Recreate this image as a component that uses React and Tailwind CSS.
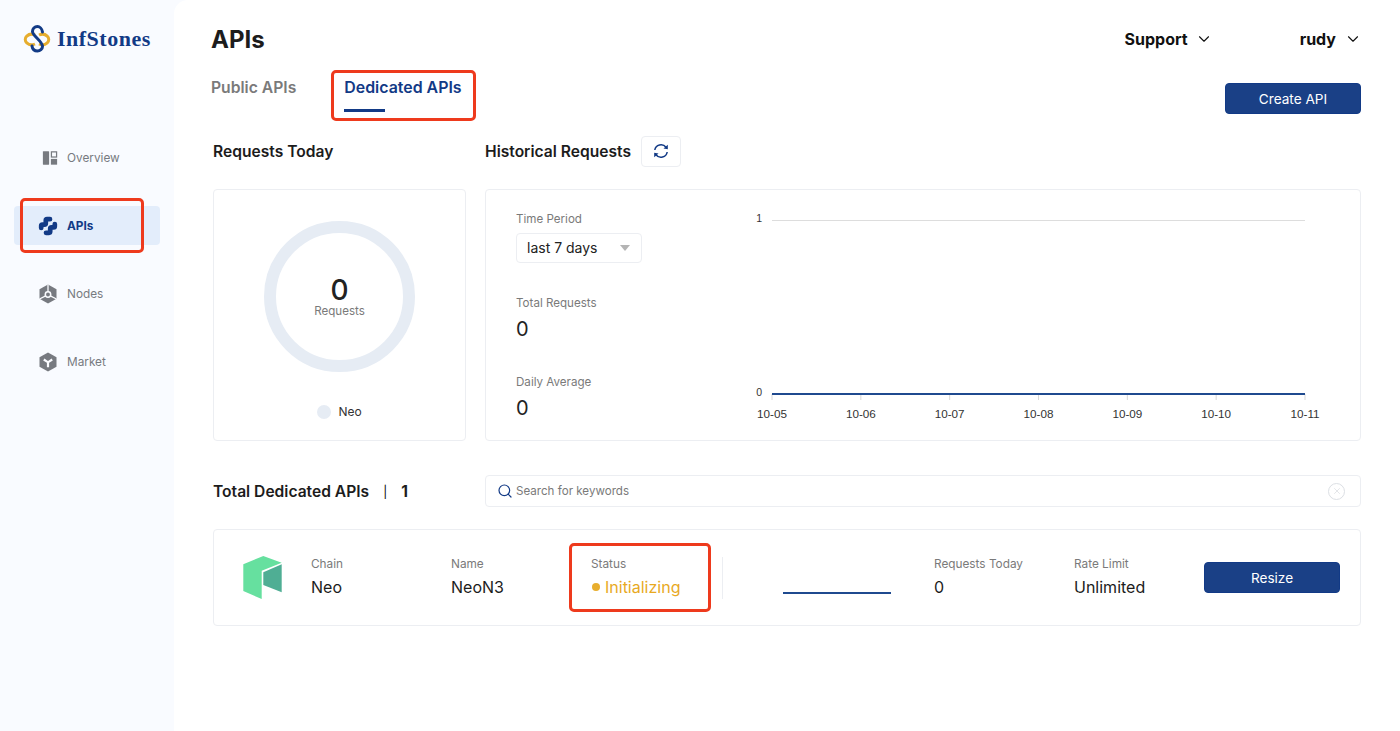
import React from 'react';
import { ChevronDown, Search, X } from 'lucide-react';

const OverviewIcon = () => (
  <svg width="18" height="18" viewBox="0 0 18 18" className="ml-[4px]">
    <rect x="1" y="1.500" width="7" height="15" rx="0.5" fill="#777a80" />
    <rect x="10.600" y="2.100" width="5.800" height="5.800" fill="none" stroke="#777a80" strokeWidth="1.400" />
    <rect x="10" y="10" width="7" height="6.500" fill="#777a80" />
  </svg>
);

const ApisIcon = () => (
  <svg width="20" height="20" viewBox="0 0 20 20" fill="none" stroke="#123a86" strokeWidth="4.700" strokeLinecap="round" strokeLinejoin="round">
    <path d="M12 3.200H9Q7.800 3.200 7.800 4.400V7.200Q7.800 8.600 6.400 8.600H4.400Q3.200 8.600 3.200 9.800V12" />
    <path d="M8 16.800H11Q12.200 16.800 12.200 15.600V12.800Q12.200 11.400 13.600 11.400H15.600Q16.800 11.400 16.800 10.200V8" />
  </svg>
);

const NodesIcon = () => (
  <svg width="20" height="20" viewBox="0 0 20 20">
    <path d="M10 .5l8.500 4.800v9.400L10 19.500l-8.500-4.800V5.300z" fill="#777a80" />
    <circle cx="10" cy="10.500" r="2.700" fill="none" stroke="#fbfcff" strokeWidth="1.500" />
    <path d="M10 .5v7.300M1.500 15l6.200-3.200M18.500 15l-6.200-3.200" stroke="#fbfcff" strokeWidth="1.300" />
  </svg>
);

const MarketIcon = () => (
  <svg width="20" height="20" viewBox="0 0 20 20">
    <path d="M10 .5l8.500 4.800v9.400L10 19.500l-8.500-4.800V5.300z" fill="#777a80" />
    <path d="M5.800 7.500L10 10.300l4.200-2.800M10 10.300v5" fill="none" stroke="#fbfcff" strokeWidth="2.200" />
  </svg>
);

const RefreshIcon = () => (
  <svg width="16" height="16" viewBox="0 0 16 16" fill="none" stroke="#123a86" strokeWidth="1.500">
    <path d="M1.800 7A6.300 6.300 0 0 1 13 4.200" />
    <path d="M14.200 9A6.300 6.300 0 0 1 3 11.800" />
    <polygon points="14.800,1.800 14.800,6.300 10.500,5.500" fill="#123a86" stroke="none" />
    <polygon points="1.200,14.200 1.200,9.700 5.500,10.500" fill="#123a86" stroke="none" />
  </svg>
);

const Logo = () => (
  <div className="flex items-center gap-[6px]">
    <svg width="28" height="28" viewBox="0 0 28 28" fill="none">
      <path d="M12 10A6.500 5.200 0 1 0 12 19" stroke="#e6ad2e" strokeWidth="3" />
      <path d="M16 10A6.500 5.200 0 1 1 16 19" stroke="#e6ad2e" strokeWidth="3" />
      <path d="M19.500 7C19 3.500 16.500 1.500 14.500 1.500C11.500 1.500 9.500 4 9.500 6.500C9.500 11 19.500 16 19.500 21.500C19.500 24 17 26 14.500 26C12 26 9.500 24.500 9 21" stroke="#123a86" strokeWidth="3" strokeLinecap="round" />
    </svg>
    <span className="font-['Liberation_Serif',serif] text-[22px] font-bold tracking-[0.5px] text-[#123a86] leading-none">InfStones</span>
  </div>
);

const NeoLogo = () => (
  <svg width="40" height="44" viewBox="0 0 40 44" className="shrink-0">
    <polygon points="0.300,8.300 20.300,0 38.700,6.700 18.700,14.700 18.700,43 0.300,35" fill="#66e09f" />
    <polygon points="20.300,16.300 38.700,8.300 38.700,36.300 20.300,29" fill="#4fae94" />
  </svg>
);

const ChartPanel = () => {
  const days = ['10-05', '10-06', '10-07', '10-08', '10-09', '10-10', '10-11'];
  return (
    <svg width="590" height="250" viewBox="0 0 590 250" className="shrink-0">
      <line x1="27" y1="30.500" x2="560" y2="30.500" stroke="#dddddd" />
      <text x="17" y="32" textAnchor="end" fontSize="10.500" fill="#333" fontFamily="Liberation Sans, sans-serif">1</text>
      <text x="17" y="206" textAnchor="end" fontSize="10.500" fill="#333" fontFamily="Liberation Sans, sans-serif">0</text>
      {days.map((d, i) => {
        const x = 27 + (533 / 6) * i;
        return (
          <g key={d}>
            <line x1={x} y1="204" x2={x} y2="210" stroke="#d8d8d8" />
            <text x={x} y="228" textAnchor="middle" fontSize="11.700" fill="#333" fontFamily="Liberation Sans, sans-serif">{d}</text>
          </g>
        );
      })}
      <line x1="27" y1="204" x2="560" y2="204" stroke="#1f4a8f" strokeWidth="2" />
    </svg>
  );
};

const NavItem = ({ icon, label, active }) => (
  <div className={`flex items-center h-[39px] w-[146px] rounded pl-[24px] gap-[9px] text-[11.800px] ${active ? 'bg-[#e3edfb] text-[#123a86] font-bold' : 'text-[#777a80]'}`}>
    <span className="w-5 flex justify-center">{icon}</span>
    <span className="mt-[2px]">{label}</span>
  </div>
);

const Field = ({ label, value, className = '' }) => (
  <div className={`-mt-[2px] ${className}`}>
    <div className="text-[11.800px] text-[#7a7a7a] leading-4">{label}</div>
    <div className="text-base leading-5 mt-[5px] text-[#1c1c1c]">{value}</div>
  </div>
);

const RedBox = ({ className }) => (
  <div className={`absolute border-[3px] border-[#ee3a1d] rounded-[5px] pointer-events-none ${className}`} />
);

export default function App() {
  return (
    <div className="relative flex h-[731px] w-[1400px] overflow-hidden bg-[#f9fbff] font-['Inter',sans-serif] text-[#1c1c1c]">
      <aside className="w-[174px] shrink-0 pl-[14px]">
        <div className="h-[138px] pt-[25px] pl-[9px]">
          <Logo />
        </div>
        <div className="flex flex-col gap-[29px]">
          <NavItem icon={<OverviewIcon />} label="Overview" />
          <NavItem icon={<ApisIcon />} label="APIs" active />
          <NavItem icon={<NodesIcon />} label="Nodes" />
          <NavItem icon={<MarketIcon />} label="Market" />
        </div>
      </aside>

      <main className="flex-1 bg-white rounded-tl-[14px] pl-[39px] pr-[39px]">
        <header className="h-[78px] flex items-center">
          <h1 className="-ml-[2px] mt-[2px] text-2xl font-bold text-[#1c1c1c]">APIs</h1>
          <div className="ml-auto flex items-center text-base font-bold text-[#111]">
            <span>Support</span>
            <ChevronDown size={18} strokeWidth={1.500} className="ml-[7px]" />
            <span className="ml-[87px]">rudy</span>
            <ChevronDown size={18} strokeWidth={1.500} className="ml-[8px] -mr-[1px]" />
          </div>
        </header>

        <div className="h-[56px] flex items-start">
          <div className="-ml-[2px] -mt-[1px] flex gap-[48px] font-semibold leading-5">
            <span className="mt-[1px] text-[15.700px] text-[#7a7a7a]">Public APIs</span>
            <div>
              <span className="text-[15.900px] text-[#123a86]">Dedicated APIs</span>
              <div className="mt-[11px] h-[3px] w-[41px] bg-[#123a86]" />
            </div>
          </div>
          <button className="ml-auto mt-[5px] pt-[1px] w-[136px] h-[31px] bg-[#1a4086] border border-[#123a86] rounded text-[13.600px] text-white">Create API</button>
        </div>

        <div className="h-[34px] flex items-center text-[15.600px] font-semibold text-[#1c1c1c]">
          <span className="mt-[2px] w-[272px]">Requests Today</span>
          <span className="mt-[2px]">Historical Requests</span>
          <span className="ml-[10px] w-[40px] h-[31px] border border-[#eceef2] rounded flex items-center justify-center">
            <RefreshIcon />
          </span>
        </div>

        <div className="mt-[21px] flex gap-[19px] h-[252px]">
          <section className="w-[253px] border border-[#eceef2] rounded-sm flex flex-col items-center pt-[31px]">
            <div className="w-[151px] h-[151px] pt-[2px] rounded-full border-[12px] border-[#e6ecf4] flex flex-col items-center justify-center">
              <div className="text-[28px] font-medium leading-[26px] text-[#222]">0</div>
              <div className="text-[11.600px] text-[#7a7a7a] leading-4">Requests</div>
            </div>
            <div className="mt-[32px] flex items-center gap-[7px] text-xs text-[#333]">
              <span className="w-[14px] h-[14px] rounded-full bg-[#e6ecf4]" />
              Neo
            </div>
          </section>

          <section className="flex-1 border border-[#eceef2] rounded-sm flex">
            <div className="w-[259px] shrink-0 pl-[30px] pt-[21px] text-[#222]">
              <div className="text-[11.600px] text-[#7a7a7a] leading-4">Time Period</div>
              <div className="mt-[6px] w-[126px] h-[30px] border border-[#eceef2] rounded flex items-center justify-between pl-[10px] pr-[11px] text-sm">
                last 7 days
                <span className="border-x-[5px] border-x-transparent border-t-[6px] border-t-[#b4b4b4]" />
              </div>
              <div className="mt-[32px] text-[11.600px] text-[#7a7a7a] leading-4">Total Requests</div>
              <div className="mt-[6px] text-xl leading-6">0</div>
              <div className="mt-[33px] text-[11.600px] text-[#7a7a7a] leading-4">Daily Average</div>
              <div className="mt-[6px] text-xl leading-6">0</div>
            </div>
            <ChartPanel />
          </section>
        </div>

        <div className="mt-[34px] h-[32px] flex items-center">
          <div className="w-[272px] pt-[2px] flex items-center text-[15.600px] font-semibold">
            <span>Total Dedicated APIs</span>
            <span className="ml-[14px] text-xs font-normal text-black">|</span>
            <span className="ml-[14px] font-bold">1</span>
          </div>
          <div className="flex-1 h-full border border-[#eceef2] rounded-sm flex items-center pl-[11px] pr-[15px] text-[11.600px] text-[#7a7a7a]">
            <Search size={16} strokeWidth={1.800} className="text-[#123a86] mr-[3px]" />
            <span className="mt-[2px]">Search for keywords</span>
            <span className="ml-auto w-[17px] h-[17px] rounded-full border border-[#dcdfe4] flex items-center justify-center">
              <X size={10} strokeWidth={1.200} className="text-[#c8ccd2]" />
            </span>
          </div>
        </div>

        <section className="mt-[22px] h-[97px] border border-[#eceef2] rounded-sm flex items-center pl-[29px] pr-[20px]">
          <NeoLogo />
          <Field label="Chain" value="Neo" className="ml-[28px] w-[140px]" />
          <Field label="Name" value="NeoN3" className="w-[140px]" />
          <div className="w-[131px] -mt-[2px]">
            <div className="text-[11.800px] text-[#7a7a7a] leading-4">Status</div>
            <div className="mt-[5px] flex items-center text-base leading-5 text-[#e8a91f]">
              <span className="w-2 h-2 ml-[1px] rounded-full bg-[#e8ae2e] mr-[5px]" />
              Initializing
            </div>
          </div>
          <div className="w-px h-[42px] bg-[#eceef2]" />
          <div className="ml-[60px] w-[108px] h-[2px] bg-[#1f4a8f] mt-[30px]" />
          <Field label="Requests Today" value="0" className="ml-[43px] w-[140px]" />
          <Field label="Rate Limit" value="Unlimited" className="w-[130px]" />
          <button className="pt-[1px] w-[136px] h-[31px] bg-[#1a4086] border border-[#123a86] rounded text-[13.600px] text-white">Resize</button>
        </section>
      </main>

      <RedBox className="left-[331px] top-[70px] w-[145px] h-[51px]" />
      <RedBox className="left-[20px] top-[198px] w-[124px] h-[55px]" />
      <RedBox className="left-[569px] top-[543px] w-[142px] h-[69px]" />
    </div>
  );
}
